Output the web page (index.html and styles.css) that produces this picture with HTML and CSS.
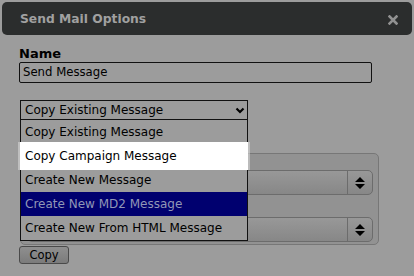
FILE: index.html
```html
<!DOCTYPE html>
<html>
<head>
<meta charset="utf-8">
<link rel="stylesheet" href="styles.css">
</head>
<body>
<div class="dialog">
  <div class="titlebar">
    <span class="title">Send Mail Options</span>
    <svg class="close" width="10" height="10" viewBox="0 0 10 10"><path d="M1.5 1.5 L8.5 8.5 M8.5 1.5 L1.5 8.5" stroke="#919191" stroke-width="2.6" stroke-linecap="square"/></svg>
  </div>
  <div class="content">
    <label class="label">Name</label>
    <div class="input">Send Message</div>
    <div class="select-wrap">
      <div class="select">
        <span>Copy Existing Message</span>
        <svg class="chev" width="10" height="7" viewBox="0 0 10 7"><path d="M1.5 1.5 L5 5 L8.5 1.5" fill="none" stroke="#000" stroke-width="2.2"/></svg>
      </div>
      <ul class="menu">
        <li class="opt">Copy Existing Message</li>
        <li class="opt hover">Copy Campaign Message</li>
        <li class="opt">Create New Message</li>
        <li class="opt selected">Create New MD2 Message</li>
        <li class="opt">Create New From HTML Message</li>
      </ul>
    </div>
    <div class="box">
      <div class="spin">
        <div class="spin-arrow"><svg width="12" height="14" viewBox="0 0 12 14"><path d="M6 1 L11 6 L1 6 Z M1 8 L11 8 L6 13 Z" fill="#000"/></svg></div>
      </div>
      <div class="spin">
        <div class="spin-arrow"><svg width="12" height="14" viewBox="0 0 12 14"><path d="M6 1 L11 6 L1 6 Z M1 8 L11 8 L6 13 Z" fill="#000"/></svg></div>
      </div>
    </div>
    <button class="btn">Copy</button>
  </div>
</div>
</body>
</html>
```
FILE: styles.css
```css
html, body {
  margin: 0;
  padding: 0;
  background: #9c9c9c;
  font-family: "DejaVu Sans", Verdana, sans-serif;
  color: #000;
}
.dialog {
  width: 414px;
  height: 276px;
  overflow: hidden;
}
.titlebar {
  margin: 2px 2px 0 2px;
  height: 33px;
  background: #2b2d2d;
  border-radius: 5px;
  display: flex;
  align-items: center;
  justify-content: space-between;
  padding: 0 14px 0 18px;
  box-sizing: border-box;
}
.title {
  font-weight: bold;
  font-size: 12.3px;
  color: #a0a0a0;
}
.close {
  display: block;
  margin-top: 2px;
}
.content {
  padding-left: 19px;
  position: relative;
}
.label {
  display: block;
  margin-top: 11px;
  font-weight: bold;
  font-size: 13px;
  line-height: 15px;
  height: 15px;
}
.input {
  margin-top: 1px;
  width: 353px;
  height: 21px;
  box-sizing: border-box;
  border: 1px solid #111;
  border-radius: 2px;
  font-size: 11.7px;
  line-height: 19px;
  padding-left: 3px;
}
.select-wrap {
  position: relative;
  margin-top: 17px;
  margin-left: 1px;
  width: 228px;
  z-index: 2;
}
.select {
  height: 20px;
  box-sizing: border-box;
  border: 1px solid #111;
  display: flex;
  align-items: center;
  justify-content: space-between;
  padding: 0 2px 0 4px;
  font-size: 12px;
}
.chev {
  display: block;
}
.menu {
  position: absolute;
  left: 0;
  top: 20px;
  width: 228px;
  margin: 0;
  padding: 0;
  list-style: none;
  border: 1px solid #111;
  border-top: none;
  box-sizing: border-box;
  background: #9c9c9c;
}
.opt {
  height: 24px;
  line-height: 24px;
  font-size: 12px;
  padding-left: 4px;
  white-space: nowrap;
}
.opt.hover {
  position: relative;
  background: #fff;
  margin: 0 -1px;
  padding-left: 5px;
  box-shadow: 0 -2px 0 #fff, 0 2px 0 #fff, 0 0 0 2px rgba(215, 215, 215, 0.6);
}
.opt.selected {
  background: #00006f;
  color: #9097b6;
}
.box {
  margin-top: 33px;
  margin-left: 1px;
  width: 359px;
  height: 92px;
  box-sizing: border-box;
  background: #929292;
  border: 1px solid #777;
  border-radius: 5px;
  padding: 16px 5px 0 6px;
  display: flex;
  flex-direction: column;
  gap: 22px;
}
.spin {
  height: 25px;
  box-sizing: border-box;
  border: 1px solid #6c6c6c;
  border-radius: 5px;
  background: linear-gradient(#989898, #878787);
  display: flex;
  justify-content: flex-end;
}
.spin-arrow {
  width: 24px;
  border-left: 1px solid #6c6c6c;
  display: flex;
  align-items: center;
  justify-content: center;
}
.spin-arrow svg {
  display: block;
}
.btn {
  display: block;
  margin-top: 1px;
  width: 50px;
  height: 18px;
  padding: 0;
  font-family: "DejaVu Sans", Verdana, sans-serif;
  font-size: 11.5px;
  line-height: 16px;
  color: #000;
  background: linear-gradient(#8f8f8f, #7b7b7b);
  border: 1px solid #4a4a4a;
  border-radius: 3px;
}
```
